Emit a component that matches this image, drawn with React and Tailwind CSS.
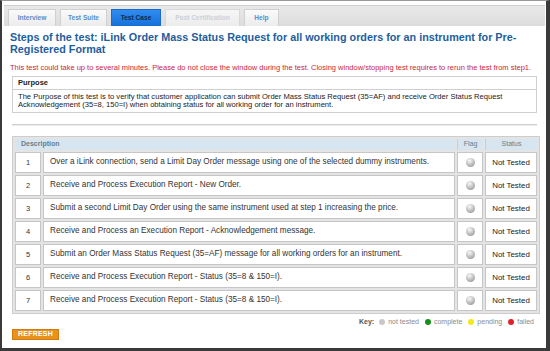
import React from "react"

const tabs = [
  { label: "Interview", state: "normal", w: "w-[48px]" },
  { label: "Test Suite", state: "normal", w: "w-[47px]" },
  { label: "Test Case", state: "active", w: "w-[50px]" },
  { label: "Post Certification", state: "disabled", w: "w-[75px]" },
  { label: "Help", state: "normal", w: "w-[35px]" },
]

const steps = [
  "Over a iLink connection, send a Limit Day Order message using one of the selected dummy instruments.",
  "Receive and Process Execution Report - New Order.",
  "Submit a second Limit Day Order using the same instrument used at step 1 increasing the price.",
  "Receive and Process an Execution Report - Acknowledgement message.",
  "Submit an Order Mass Status Request (35=AF) message for all working orders for an instrument.",
  "Receive and Process Execution Report - Status (35=8 & 150=I).",
  "Receive and Process Execution Report - Status (35=8 & 150=I).",
]

function Tab({ label, state, w }) {
  let cls = "bg-[linear-gradient(#fafafa,#ececec)] text-[#5a8fca] border-[#d0d0d0]"
  if (state === "active") cls = "bg-[linear-gradient(#2f8cf0,#1670d8)] text-[#0d2a55] border-[#1a6acc]"
  if (state === "disabled") cls = "bg-[linear-gradient(#f6f6f6,#ececec)] text-[#c9d2dc] border-[#d8d8d8]"
  return (
    <div className={`${w} h-[17px] flex items-center justify-center border border-b-0 text-[6.6px] font-bold whitespace-nowrap ${cls}`}>
      {label}
    </div>
  )
}

function Ball() {
  return <div className="mx-auto w-[9px] h-[9px] rounded-full bg-[radial-gradient(circle_at_40%_30%,#f8f8f8,#b4b4b4_60%,#8a8a8a)]" />
}

export default function App() {
  return (
    <div className="w-[550px] h-[351px] bg-white overflow-hidden border-l-2 border-r-[4px] border-b-[3px] border-t border-[#3a3a3a] border-t-[#9a9a9a] font-['Liberation_Sans',Arial,sans-serif]">
      <div className="mt-[4px] ml-[2px] mr-[1px] h-[21px] border-t border-[#cfcfcf] bg-[linear-gradient(#e9e9e9,#dcdcdc)] flex items-end gap-[4px] pl-[4px]">
        {tabs.map(t => <Tab key={t.label} {...t} />)}
      </div>

      <div className="pl-[8px] pr-[9px]">
        <h1 className="mt-[5px] text-[10.8px] leading-[12px] font-bold text-[#1d5e9e]">
          Steps of the test: iLink Order Mass Status Request for all working orders for an instrument for Pre-Registered Format
        </h1>

        <p className="mt-[9px] text-[7.5px] leading-[8px] text-[#c8283a] whitespace-nowrap">
          This test could take up to several minutes. Please do not close the window during the test. Closing window/stopping test requires to rerun the test from step1.
        </p>

        <div className="mt-[4px] ml-[2px] border border-[#cfcfcf] text-[#222]">
          <div className="h-[13px] px-[5px] flex items-center border-b border-[#cfcfcf] text-[7.5px] font-bold">Purpose</div>
          <div className="px-[5px] pt-[3px] pb-[3px] text-[7.6px] leading-[8px]">
            The Purpose of this test is to verify that customer application can submit Order Mass Status Request (35=AF) and receive Order Status Request Acknowledgement (35=8, 150=I) when obtaining status for all working order for an instrument.
          </div>
        </div>

        <div className="mt-[11px] ml-[2px] h-[2px] border-t border-[#cfcfcf] bg-[#ececec]" />

        <table className="mt-[10px] ml-[2px] w-[528px] border-separate border-spacing-x-[2px] border-spacing-y-[2px] bg-[#e4e4e4] border border-[#cdcdcd] text-[8.2px] text-[#333]">
          <thead>
            <tr className="h-[11px] text-[7px] text-[#6b7d8c]">
              <th colSpan={2} className="text-left pl-[6px] font-bold bg-[#d6e5ef]">Description</th>
              <th className="w-[26px] font-normal bg-[#d6e5ef] border-l border-[#c0cfd9]">Flag</th>
              <th className="w-[52px] font-normal bg-[#d6e5ef] border-l border-[#c0cfd9]">Status</th>
            </tr>
          </thead>
          <tbody>
            {steps.map((s, i) => (
              <tr key={i} className="h-[21px]">
                <td className="w-[26px] text-center bg-white border border-[#c6c6c6] text-[7.5px]">{i + 1}</td>
                <td className="pl-[6px] bg-white border border-[#c6c6c6] whitespace-nowrap">{s}</td>
                <td className="bg-white border border-[#c6c6c6]"><Ball /></td>
                <td className="text-center bg-white border border-[#c6c6c6] text-[#222] text-[7.9px] whitespace-nowrap">Not Tested</td>
              </tr>
            ))}
          </tbody>
        </table>

        <div className="mt-[3px] flex items-center justify-end gap-[3px] pr-[3px] text-[7px] text-[#8a8a8a]">
          <span className="font-bold text-[#555]">Key:</span>
          <span className="ml-[2px] w-[6px] h-[6px] rounded-full bg-[#c8c8c8]" />
          <span>not tested</span>
          <span className="ml-[3px] w-[6px] h-[6px] rounded-full bg-[#12901a]" />
          <span>complete</span>
          <span className="ml-[3px] w-[6px] h-[6px] rounded-full bg-[#f2e81e]" />
          <span>pending</span>
          <span className="ml-[3px] w-[6px] h-[6px] rounded-full bg-[#e2202a]" />
          <span>failed</span>
        </div>

        <div className="mt-[1px] ml-[2px] w-[47px] h-[11px] flex items-center justify-center bg-[#e8921c] border border-[#d07a10] text-white text-[7px] font-bold tracking-[0.2px]">
          REFRESH
        </div>
      </div>
    </div>
  )
}
